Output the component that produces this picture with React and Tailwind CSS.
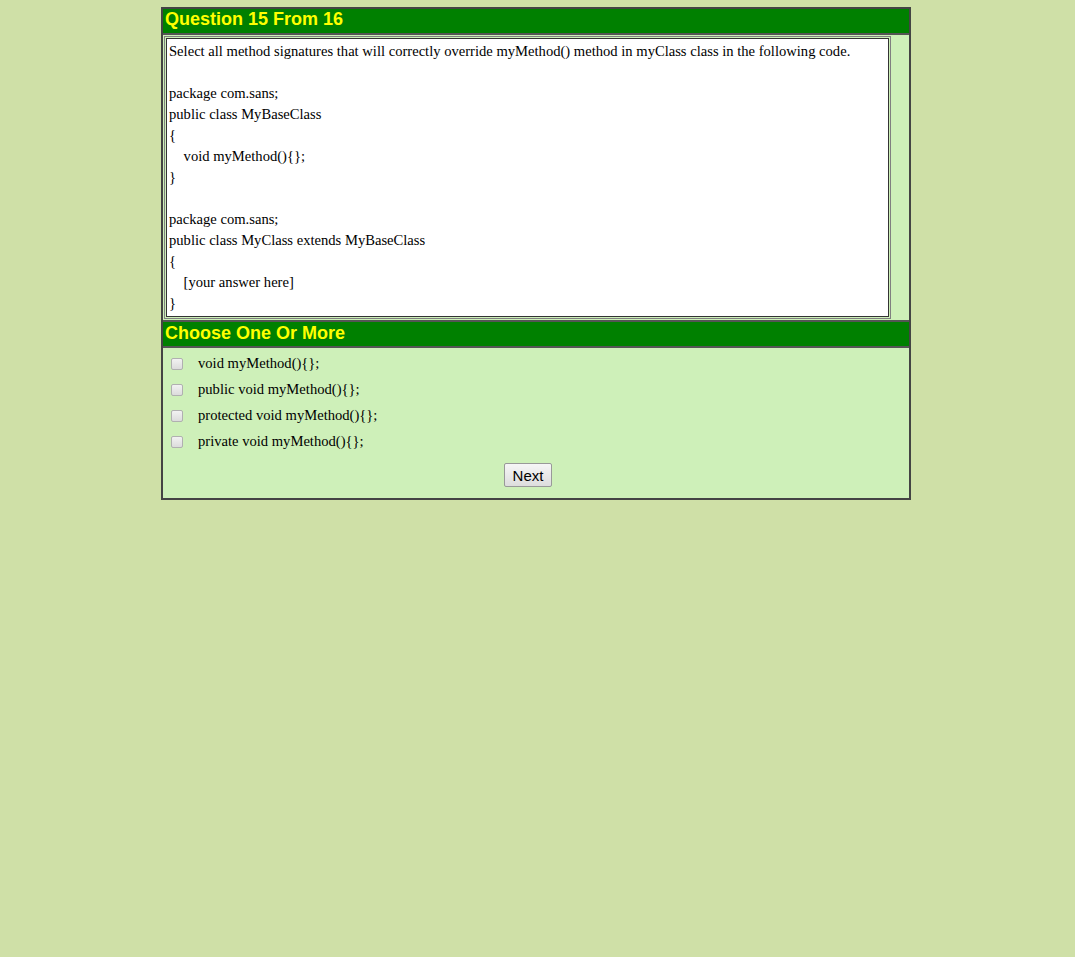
export default function App() {
  const codeLines = [
    'Select all method signatures that will correctly override myMethod() method in myClass class in the following code.',
    '',
    'package com.sans;',
    'public class MyBaseClass',
    '{',
    '\u00a0\u00a0\u00a0\u00a0void myMethod(){};',
    '}',
    '',
    'package com.sans;',
    'public class MyClass extends MyBaseClass',
    '{',
    '\u00a0\u00a0\u00a0\u00a0[your answer here]',
    '}',
  ];

  const options = [
    'void myMethod(){};',
    'public void myMethod(){};',
    'protected void myMethod(){};',
    'private void myMethod(){};',
  ];

  return (
    <div className="min-h-screen bg-[#CFE0A7] pt-[7px]">
      <div className="ml-[161px] w-[750px] border-2 border-[#444] bg-[#CEF0B9]">
        {/* Question header */}
        <div className="h-[26px] bg-[#008000] border-b-2 border-[#555] px-[2px] font-['Liberation_Sans',Arial,sans-serif] font-bold text-[18px] leading-[21px] text-[#FFFF00]">
          Question 15 From 16
        </div>

        {/* Question body */}
        <div className="flex">
          <div className="w-[729px] p-[1px]">
            <div className="border border-[#808080] p-[1px]">
              <div className="border border-[#333] bg-white px-[2px] pt-[2px] pb-[2px] font-['Liberation_Serif','Times_New_Roman',serif] text-[14.6px] leading-[21px] text-black">
                {codeLines.map((line, i) => (
                  <div key={i} className="h-[21px] whitespace-pre">
                    {line}
                  </div>
                ))}
              </div>
            </div>
          </div>
          <div className="flex-1" />
        </div>

        {/* Answers header */}
        <div className="h-[28px] bg-[#008000] border-y-2 border-[#555] px-[2px] pt-[1px] font-['Liberation_Sans',Arial,sans-serif] font-bold text-[18px] leading-[21px] text-[#FFFF00]">
          Choose One Or More
        </div>

        {/* Options */}
        <div className="pt-[3px] pb-[11px] font-['Liberation_Serif','Times_New_Roman',serif] text-[14.6px] text-black">
          {options.map((opt, i) => (
            <label key={i} className="flex items-center h-[26px] pl-[8px]">
              <span className="w-[12px] h-[12px] rounded-[2px] border border-[#b0b0b0] bg-gradient-to-b from-[#f2f2f2] to-[#dcdcdc] mr-[15px]" />
              <span>{opt}</span>
            </label>
          ))}
          <div className="w-[730px] flex justify-center pt-[8px]">
            <button className="h-[24px] px-[8px] border border-[#999] rounded-[2px] bg-gradient-to-b from-[#f6f6f6] to-[#dddddd] font-['Liberation_Sans',Arial,sans-serif] text-[15px] text-black leading-none">
              Next
            </button>
          </div>
        </div>
      </div>
    </div>
  );
}
